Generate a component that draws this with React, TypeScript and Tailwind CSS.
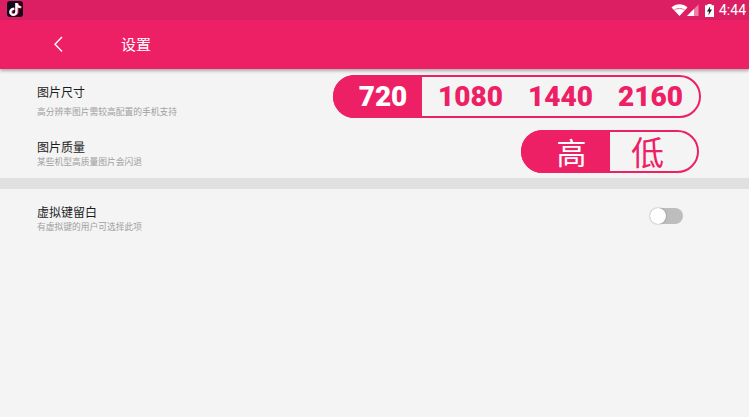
import React from "react";
import { FaTiktok } from "react-icons/fa";

const cjk = { fontFamily: '"Noto Sans CJK SC", "Noto Sans", sans-serif' };

function Label({ title, sub, subGap, top }: { title: string; sub: string; subGap: string; top: string }) {
  return (
    <div className={`flex flex-col ${top}`}>
      <div className="text-[12px] leading-[14px] text-[#1c1c1c]" style={cjk}>{title}</div>
      <div className={`text-[8.75px] leading-[12px] text-[#a0a0a0] ${subGap}`} style={cjk}>{sub}</div>
    </div>
  );
}

export default function App() {
  return (
    <div className="w-[749px] h-[417px] bg-[#f4f4f4] overflow-hidden flex flex-col">
      <div className="h-[20px] bg-[#dc1f62] flex items-center pl-[7px] pr-[3px]">
        <div className="relative -mt-[2px] w-[16px] h-[16px] rounded-[3px] bg-[#14081a] flex items-center justify-center">
          <FaTiktok className="absolute text-[#25f4ee] w-[12px] h-[13px] left-[1.5px] top-[1.5px]" />
          <FaTiktok className="absolute text-[#fe2c55] w-[12px] h-[13px] left-[2.5px] top-[2px]" />
          <FaTiktok className="absolute text-white w-[12px] h-[13px] left-[2px] top-[1.5px]" />
        </div>
        <div className="ml-auto flex items-center">
          <svg width="17" height="12" viewBox="0 0 17 12">
            <path d="M0.5 3.5 C5 -0.8 12 -0.8 16.5 3.5 L8.5 12 Z" fill="#ffffff" />
            <path d="M3.2 6.2 C6 3.9 11 3.9 13.8 6.2" fill="none" stroke="#ee6a96" strokeWidth="1" />
          </svg>
          <svg width="12" height="12" viewBox="0 0 12 12" className="ml-[-1px]">
            <path d="M11.5 0.5 V12 H0 Z" fill="#ef7fa5" />
            <path d="M7 5 V12 H0 Z" fill="#ffffff" />
          </svg>
          <svg width="9" height="13" viewBox="0 0 9 13" className="ml-[6px]">
            <path d="M2.5 0 H6.5 V1.2 H9 V13 H0 V1.2 H2.5 Z" fill="#ffffff" />
            <path d="M5.2 2.2 L2 7.6 H4 L3.4 11.4 L7 5.6 H4.9 Z" fill="#222222" />
          </svg>
          <span className="ml-[5px] text-[14px] leading-[20px] text-white" style={{ fontFamily: "Roboto, sans-serif" }}>4:44</span>
        </div>
      </div>

      <div className="h-[49px] bg-[#ee2065] flex items-center pl-[52px] shadow-[0_2px_3px_rgba(0,0,0,0.3)] relative">
        <svg width="12" height="17" viewBox="0 0 12 17" fill="none" stroke="#ffffff" strokeWidth="1.4">
          <path d="M10 1 L3 8.2 L10 15.5" />
        </svg>
        <div className="ml-[57px] text-[15px] text-white" style={cjk}>设置</div>
      </div>

      <div className="flex items-center justify-between h-[43px] mt-[6px] pl-[37px] pr-[48px]">
        <Label title="图片尺寸" sub="高分辨率图片需较高配置的手机支持" subGap="mt-[7px]" top="pt-[10px]" />
        <div className="flex h-[43px] w-[368px] rounded-full border-2 border-[#ee2065] text-[#ee2065] text-[28px] font-black" style={{ fontFamily: "Roboto, sans-serif" }}>
          <div className="w-[89px] -my-[2px] -ml-[2px] rounded-l-full bg-[#ee2065] text-white flex items-center justify-center pl-[11px]">720</div>
          <div className="flex-1 flex items-center justify-between pl-[16px] pr-[16px]">
            <span>1080</span>
            <span>1440</span>
            <span>2160</span>
          </div>
        </div>
      </div>

      <div className="flex items-center justify-between h-[43px] mt-[12px] pl-[37px] pr-[50px]">
        <Label title="图片质量" sub="某些机型高质量图片会闪退" subGap="mt-[2px]" top="pt-[5px]" />
        <div className="flex h-[43px] w-[178px] rounded-full border-2 border-[#ee2065]" style={cjk}>
          <div className="w-[89px] -my-[2px] -ml-[2px] rounded-l-full bg-[#ee2065] text-white text-[30px] flex items-center justify-center pl-[12px]">高</div>
          <div className="flex-1 text-[#ee2065] text-[33px] flex items-center justify-center pr-[12px]">低</div>
        </div>
      </div>

      <div className="h-[11px] mt-[5px] bg-[#e0e0e0]" />

      <div className="flex items-start justify-between mt-[16px] pl-[37px] pr-[66px]">
        <Label title="虚拟键留白" sub="有虚拟键的用户可选择此项" subGap="mt-[2px]" top="" />
        <div className="mt-[3px] w-[33px] h-[16px] rounded-full bg-[#bdbdbd] flex items-center">
          <div className="w-[16px] h-[16px] rounded-full bg-white shadow-[0_0_2px_rgba(0,0,0,0.35)]" />
        </div>
      </div>
    </div>
  );
}
